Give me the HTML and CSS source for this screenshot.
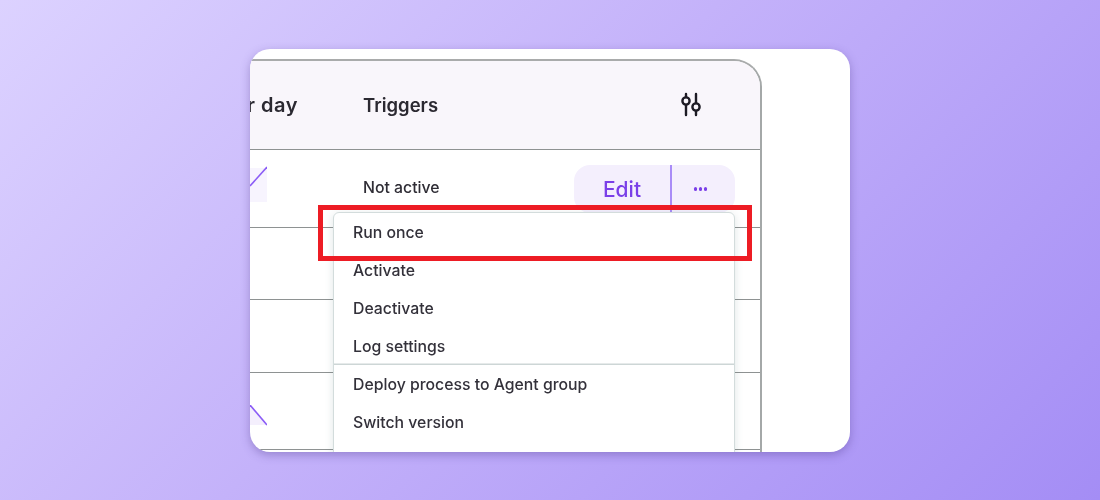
FILE: index.html
```html
<!DOCTYPE html>
<html lang="en">
<head>
<meta charset="utf-8">
<title>Run once</title>
<link rel="stylesheet" href="styles.css">
</head>
<body>
<main class="stage">
  <section class="card">
    <div class="table">
      <div class="row head">
        <div class="col-day">Per day</div>
        <div class="col-trig">Triggers</div>
        <div class="col-act">
          <svg class="sliders" width="24" height="28" viewBox="0 0 24 28" fill="none" stroke="#1d1b24" stroke-width="2.4" stroke-linecap="round">
            <path d="M7 3v3M7 14v10M17 3v9M17 20v4"/>
            <circle cx="7" cy="10" r="3.6"/>
            <circle cx="17" cy="16" r="3.6"/>
          </svg>
        </div>
      </div>
      <div class="row r1">
        <div class="col-day">
          <svg class="spark" width="17" height="36" viewBox="0 0 17 36"><rect x="0" y="2" width="17" height="34" fill="#f7f4fe"/><path d="M0 20L17 1" stroke="#8b5cf6" stroke-width="1.6" fill="none"/></svg>
        </div>
        <div class="col-trig small">Not active</div>
        <div class="btns">
          <span class="edit">Edit</span>
          <span class="more"><i></i><i></i><i></i></span>
        </div>
      </div>
      <div class="row r2"></div>
      <div class="row r3"></div>
      <div class="row r4">
        <div class="col-day">
          <svg class="spark" width="17" height="36" viewBox="0 0 17 36"><path d="M0 0V20H17Z" fill="#f4effd"/><path d="M0 0L17 20" stroke="#8b5cf6" stroke-width="1.6" fill="none"/></svg>
        </div>
      </div>
      <div class="r5"></div>
    </div>
    <nav class="menu">
      <div class="group">
        <div class="item">Run once</div>
        <div class="item">Activate</div>
        <div class="item">Deactivate</div>
        <div class="item">Log settings</div>
      </div>
      <div class="group second">
        <div class="item">Deploy process to Agent group</div>
        <div class="item">Switch version</div>
      </div>
    </nav>
    <div class="highlight"></div>
  </section>
</main>
</body>
</html>
```
FILE: styles.css
```css
* { box-sizing: border-box; }
html, body { margin: 0; height: 100%; }
body { font-family: "Inter", "Noto Sans", sans-serif; color: #2f2d35; overflow: hidden; }
.stage {
  width: 1100px; height: 500px; padding-top: 49px;
  display: flex; justify-content: center; align-items: flex-start;
  background: linear-gradient(135deg, #dcd2ff 0%, #c4b2fa 45%, #a48df5 100%);
}
.card {
  position: relative; width: 600px; height: 403px; padding-top: 10px;
  background: #fff; border-radius: 20px; overflow: hidden;
  box-shadow: 0 3px 10px rgba(70, 50, 130, .35);
}
.table {
  width: 512px; border-top: 2px solid #a9abab; border-right: 2px solid #a4a8a8;
  border-top-right-radius: 28px; overflow: hidden; filter: blur(.3px);
}
.row { display: flex; align-items: center; border-bottom: 1px solid #8e9292; }
.head { height: 89px; background: #f9f6fb; font-size: 18.5px; font-weight: 600; color: #2b2931; }
.r1 { height: 78px; }
.r2 { height: 72px; }
.r3 { height: 73px; }
.r4 { height: 77px; align-items: flex-start; }
.r5 { height: 6px; }
.col-day { flex: none; display: flex; justify-content: flex-end; white-space: nowrap; margin-left: -50px; }
.head .col-day { width: 98px; font-size: 20px; letter-spacing: .5px; }
.head .col-trig { margin-left: 65px; }
.r1 .col-day { width: 67px; align-self: flex-start; padding-top: 16px; }
.r1 .col-trig { margin-left: 96px; }
.r4 .col-day { width: 67px; padding-top: 32px; }
.col-trig { flex: none; width: 212px; }
.small { font-size: 15.8px; font-weight: 500; padding-bottom: 2px; }
.col-act { margin-left: 104px; display: flex; }
.sliders { display: block; }
.btns {
  display: flex; width: 161px; height: 48px; margin-left: -1px; margin-top: 1px;
  background: #f4effd; border-radius: 16px; color: #7a3fe8;
}
.edit { width: 98px; display: flex; align-items: center; justify-content: center; font-size: 21px; font-weight: 500; border-right: 2px solid #a98cf7; }
.more { flex: 1; display: flex; align-items: center; justify-content: center; gap: 1.5px; padding-right: 6px; }
.more i { width: 3.5px; height: 3.5px; border-radius: 50%; background: #7a3fe8; }
.menu {
  position: absolute; left: 83px; top: 163px; width: 402px; height: 260px;
  background: #fff; border: 1px solid #d3dcdc; border-radius: 6px;
  box-shadow: 0 2px 8px rgba(80, 110, 110, .18);
  font-size: 15.8px; font-weight: 500; color: #33313a; filter: blur(.3px);
}
.group { display: flex; flex-direction: column; }
.second { box-shadow: 0 -1.5px 0 #cdd6d6; }
.item { height: 38px; display: flex; align-items: center; padding-left: 19px; white-space: nowrap; }
.highlight {
  position: absolute; left: 68px; top: 156px; width: 434px; height: 56px;
  border: 5px solid #ed1c24;
}
```
